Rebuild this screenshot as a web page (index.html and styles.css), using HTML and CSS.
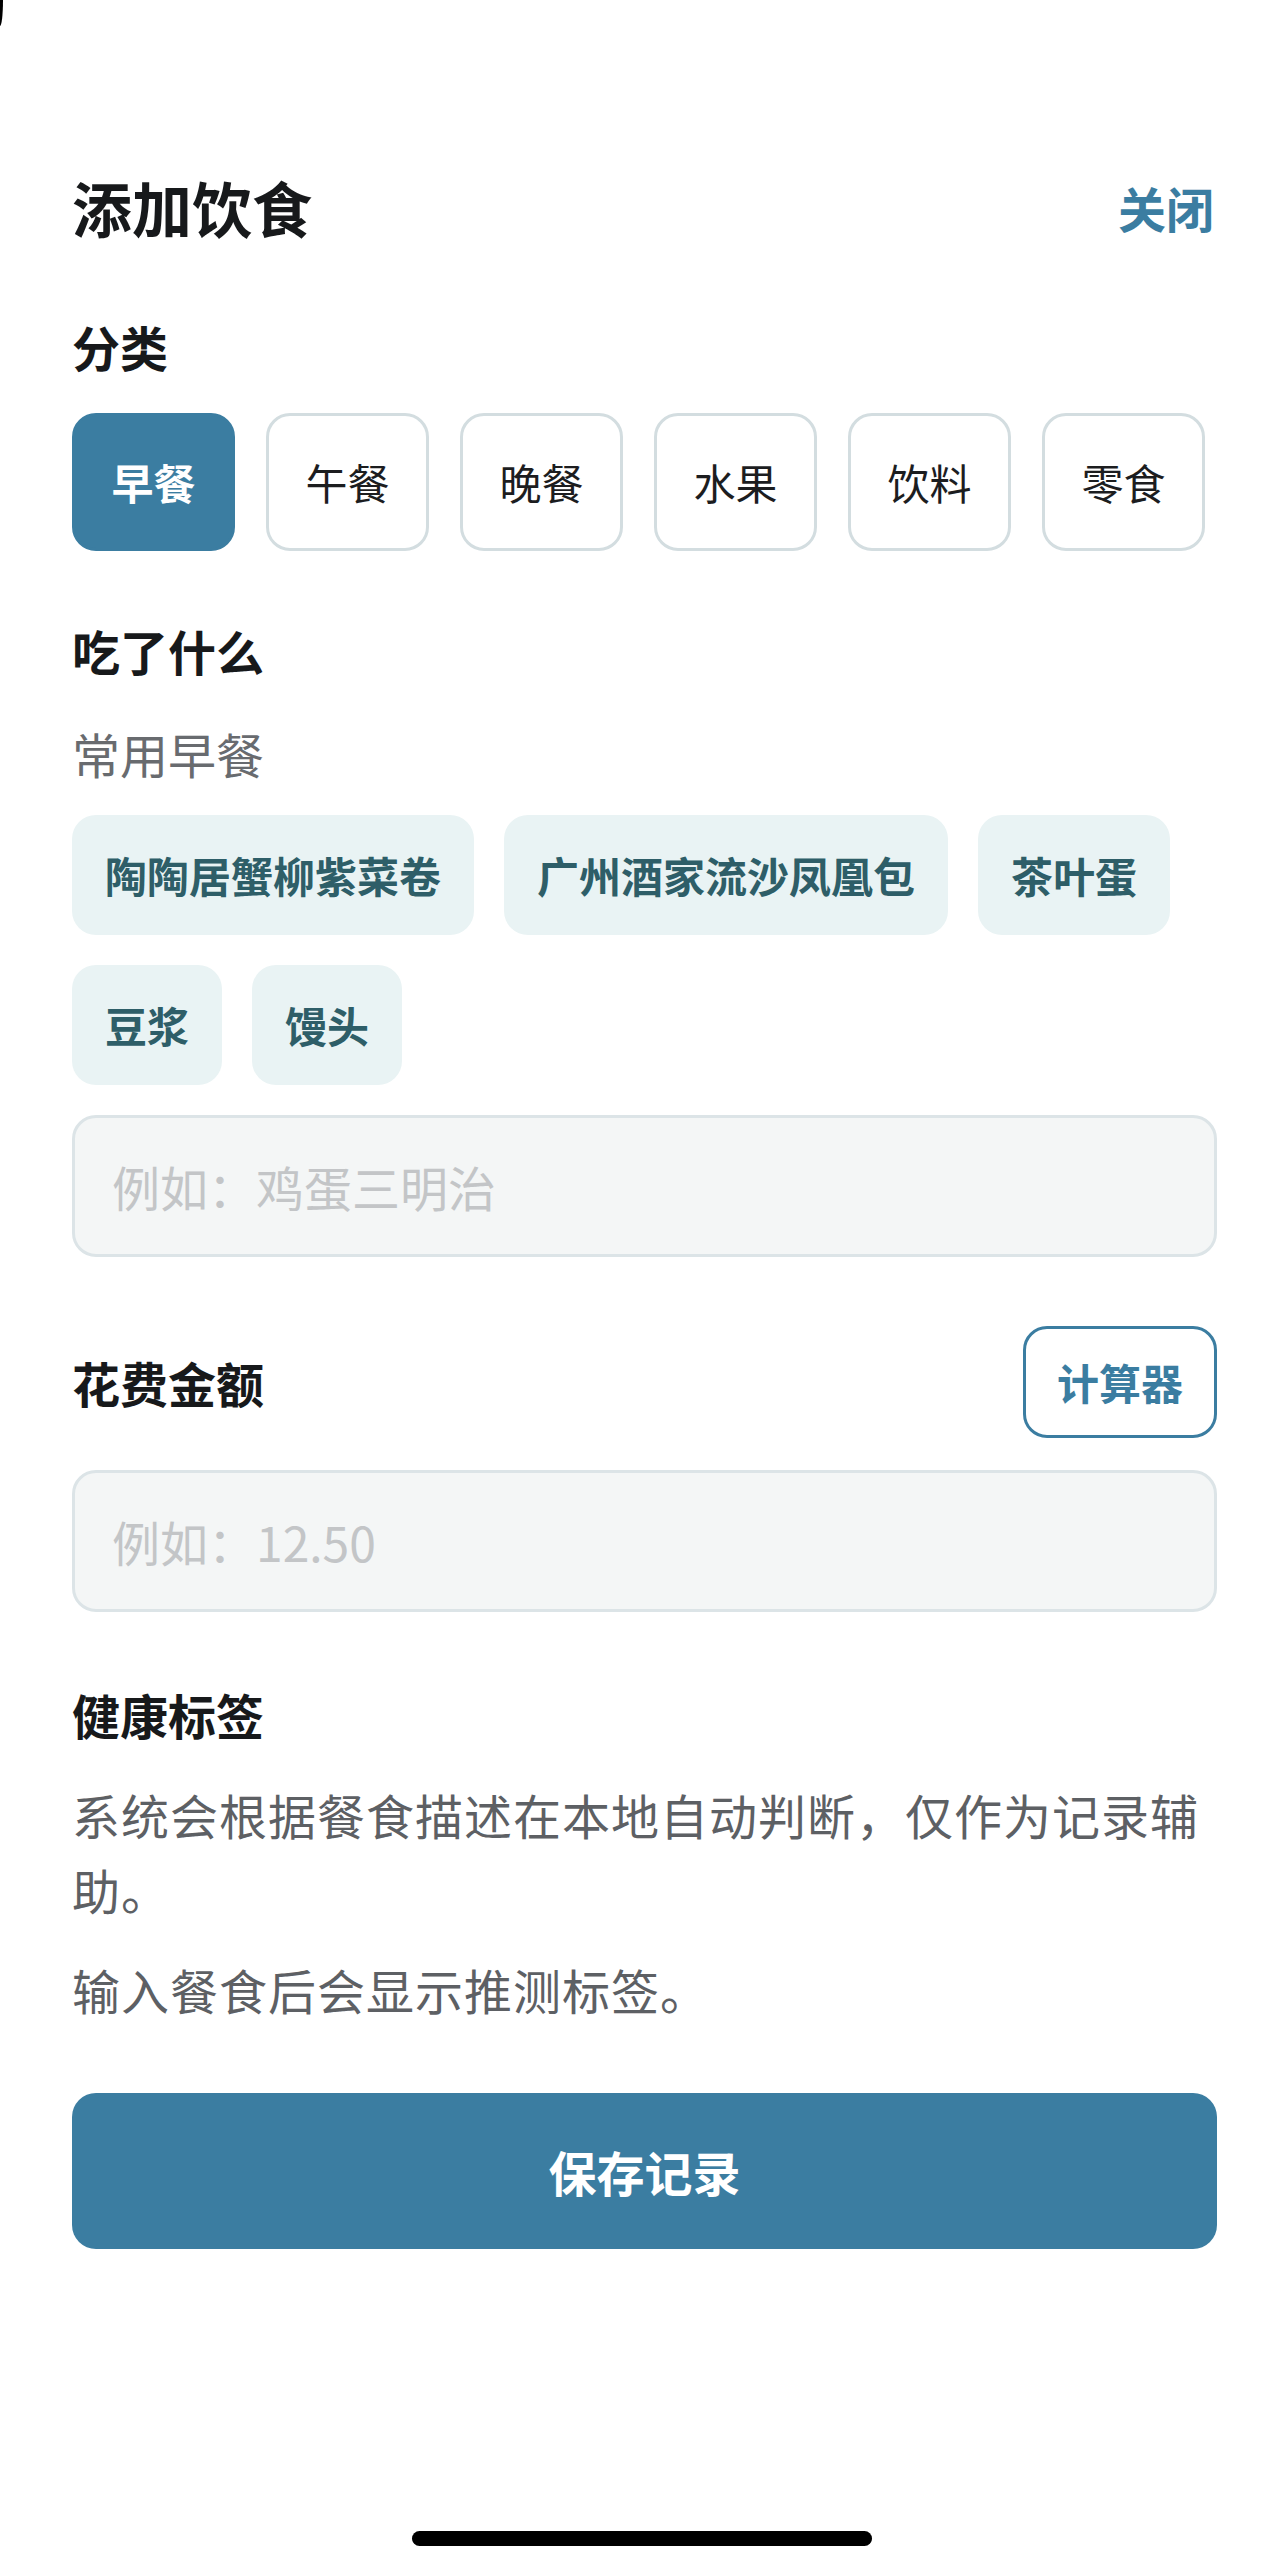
FILE: index.html
```html
<!DOCTYPE html>
<html lang="zh-CN">
<head>
<meta charset="utf-8">
<title>添加饮食</title>
<link rel="stylesheet" href="styles.css">
</head>
<body>
<div class="corner"></div>
<main class="sheet">
  <header class="sheet-header">
    <h1 class="sheet-title">添加饮食</h1>
    <button class="link-btn" type="button">关闭</button>
  </header>

  <h2 class="label label-category">分类</h2>
  <div class="segments">
    <button class="segment is-active" type="button">早餐</button>
    <button class="segment" type="button">午餐</button>
    <button class="segment" type="button">晚餐</button>
    <button class="segment" type="button">水果</button>
    <button class="segment" type="button">饮料</button>
    <button class="segment" type="button">零食</button>
  </div>

  <h2 class="label label-food">吃了什么</h2>
  <p class="hint">常用早餐</p>
  <div class="suggestions">
    <button class="suggestion" type="button">陶陶居蟹柳紫菜卷</button>
    <button class="suggestion" type="button">广州酒家流沙凤凰包</button>
    <button class="suggestion" type="button">茶叶蛋</button>
    <button class="suggestion" type="button">豆浆</button>
    <button class="suggestion" type="button">馒头</button>
  </div>
  <input class="field field-food" type="text" placeholder="例如：鸡蛋三明治">

  <div class="amount-row">
    <h2 class="label">花费金额</h2>
    <button class="calc-btn" type="button">计算器</button>
  </div>
  <input class="field field-amount" type="text" placeholder="例如：12.50">

  <h2 class="label label-health">健康标签</h2>
  <p class="desc desc-first">系统会根据餐食描述在本地自动判断，仅作为记录辅助。</p>
  <p class="desc desc-second">输入餐食后会显示推测标签。</p>

  <button class="save-btn" type="button">保存记录</button>
</main>
<div class="home-indicator"></div>
</body>
</html>
```

FILE: styles.css
```css
html, body {
  margin: 0;
  padding: 0;
}

body {
  position: relative;
  width: 1284px;
  height: 2570px;
  overflow: hidden;
  background: #ffffff;
  font-family: "Noto Sans CJK SC", "Noto Sans", sans-serif;
  color: #17191b;
}

button,
input {
  font-family: inherit;
}

.corner {
  position: absolute;
  top: 0;
  left: 0;
  width: 3px;
  height: 26px;
  background: #000;
  border-bottom-right-radius: 3px 26px;
}

.sheet {
  padding: 171px 67px 0 72px;
}

.sheet-header {
  display: flex;
  justify-content: space-between;
  align-items: center;
  height: 72px;
}

.sheet-title {
  margin: 0;
  font-size: 60px;
  line-height: 72px;
  font-weight: 700;
  color: #17191b;
}

.link-btn {
  margin: 0 3px 0 0;
  padding: 0;
  border: 0;
  background: none;
  font-size: 48px;
  line-height: 64px;
  font-weight: 600;
  color: #3b7da1;
}

.label {
  margin: 0;
  font-size: 48px;
  line-height: 64px;
  font-weight: 700;
  color: #17191b;
}

.label-category {
  margin-top: 71px;
}

.segments {
  display: flex;
  gap: 31px;
  margin-top: 35px;
}

.segment {
  width: 163px;
  height: 138px;
  padding: 0;
  box-sizing: border-box;
  border: 3px solid #d3dde0;
  border-radius: 24px;
  background: #ffffff;
  font-size: 42px;
  line-height: 1;
  font-weight: 400;
  color: #1c1d1f;
}

.segment.is-active {
  background: #3b7da1;
  border-color: #3b7da1;
  color: #ffffff;
  font-weight: 600;
}

.label-food {
  margin-top: 67px;
}

.hint {
  margin: 39px 0 0;
  font-size: 48px;
  line-height: 64px;
  color: #686b6f;
}

.suggestions {
  display: flex;
  flex-wrap: wrap;
  gap: 30px;
  margin-top: 30px;
}

.suggestion {
  height: 120px;
  padding: 0 33px;
  border: 0;
  border-radius: 24px;
  background: #e9f3f4;
  color: #2e5e68;
  font-size: 42px;
  line-height: 1;
  font-weight: 600;
}

.field {
  display: block;
  width: 100%;
  height: 142px;
  box-sizing: border-box;
  margin: 30px 0 0;
  padding: 0 37px;
  border: 3px solid #dce4e7;
  border-radius: 24px;
  background: #f4f6f6;
  font-size: 48px;
  color: #17191b;
  outline: none;
}

.field::placeholder {
  color: #c3c5c7;
}

.amount-row {
  display: flex;
  justify-content: space-between;
  align-items: center;
  margin-top: 69px;
}

.calc-btn {
  height: 112px;
  padding: 0 31px;
  box-sizing: border-box;
  border: 3px solid #3b7da1;
  border-radius: 24px;
  background: #ffffff;
  color: #3b7da1;
  font-size: 42px;
  line-height: 1;
  font-weight: 700;
}

.field-amount {
  margin-top: 32px;
}

.label-health {
  margin-top: 70px;
}

.desc {
  margin: 0;
  font-size: 48px;
  line-height: 75px;
  letter-spacing: 1px;
  color: #5d6064;
}

.desc-first {
  margin-top: 31px;
}

.desc-second {
  margin-top: 25px;
}

.save-btn {
  display: block;
  width: 100%;
  height: 156px;
  margin-top: 66px;
  padding: 0;
  border: 0;
  border-radius: 24px;
  background: #3b7da1;
  color: #ffffff;
  font-size: 48px;
  line-height: 1;
  font-weight: 600;
}

.home-indicator {
  position: absolute;
  top: 2531px;
  left: 412px;
  width: 460px;
  height: 15px;
  border-radius: 8px;
  background: #000000;
}
```
